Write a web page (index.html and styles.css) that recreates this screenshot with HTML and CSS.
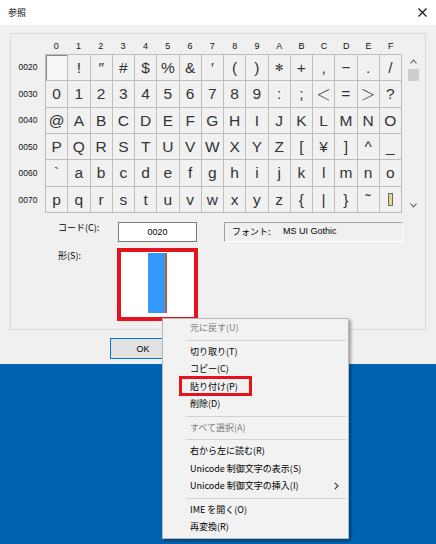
FILE: index.html
```html
<!DOCTYPE html>
<html lang="ja">
<head>
<meta charset="utf-8">
<title>参照</title>
<link rel="stylesheet" href="styles.css">
</head>
<body>
<div class="screen">
  <div class="dialog">
    <div class="titlebar">
      <span class="title">参照</span>
      <svg class="close" width="9" height="9" viewBox="0 0 9 9"><path d="M0.5 0.5 L8.5 8.5 M8.5 0.5 L0.5 8.5" stroke="#111" stroke-width="1.1" fill="none"/></svg>
    </div>
    <div class="body">
      <div class="group">
        <div class="table">
          <div class="corner"></div>
          <div class="colhead">
            <span>0</span><span>1</span><span>2</span><span>3</span><span>4</span><span>5</span><span>6</span><span>7</span><span>8</span><span>9</span><span>A</span><span>B</span><span>C</span><span>D</span><span>E</span><span>F</span>
          </div>
          <div class="corner"></div>
          <div class="rowlabels">
            <span>0020</span><span>0030</span><span>0040</span><span>0050</span><span>0060</span><span>0070</span>
          </div>
          <div class="cells">
            <span class="cell sel"></span><span class="cell">!</span><span class="cell">″</span><span class="cell">#</span><span class="cell">$</span><span class="cell">%</span><span class="cell">&amp;</span><span class="cell">′</span><span class="cell">(</span><span class="cell">)</span><span class="cell small">✻</span><span class="cell">+</span><span class="cell">,</span><span class="cell">−</span><span class="cell">.</span><span class="cell">/</span>
            <span class="cell">0</span><span class="cell">1</span><span class="cell">2</span><span class="cell">3</span><span class="cell">4</span><span class="cell">5</span><span class="cell">6</span><span class="cell">7</span><span class="cell">8</span><span class="cell">9</span><span class="cell">:</span><span class="cell">;</span><span class="cell cjk">＜</span><span class="cell">=</span><span class="cell cjk">＞</span><span class="cell">?</span>
            <span class="cell">@</span><span class="cell">A</span><span class="cell">B</span><span class="cell">C</span><span class="cell">D</span><span class="cell">E</span><span class="cell">F</span><span class="cell">G</span><span class="cell">H</span><span class="cell">I</span><span class="cell">J</span><span class="cell">K</span><span class="cell">L</span><span class="cell">M</span><span class="cell">N</span><span class="cell">O</span>
            <span class="cell">P</span><span class="cell">Q</span><span class="cell">R</span><span class="cell">S</span><span class="cell">T</span><span class="cell">U</span><span class="cell">V</span><span class="cell">W</span><span class="cell">X</span><span class="cell">Y</span><span class="cell">Z</span><span class="cell">[</span><span class="cell">¥</span><span class="cell">]</span><span class="cell">^</span><span class="cell">_</span>
            <span class="cell">`</span><span class="cell">a</span><span class="cell">b</span><span class="cell">c</span><span class="cell">d</span><span class="cell">e</span><span class="cell">f</span><span class="cell">g</span><span class="cell">h</span><span class="cell">i</span><span class="cell">j</span><span class="cell">k</span><span class="cell">l</span><span class="cell">m</span><span class="cell">n</span><span class="cell">o</span>
            <span class="cell">p</span><span class="cell">q</span><span class="cell">r</span><span class="cell">s</span><span class="cell">t</span><span class="cell">u</span><span class="cell">v</span><span class="cell">w</span><span class="cell">x</span><span class="cell">y</span><span class="cell">z</span><span class="cell">{</span><span class="cell">|</span><span class="cell">}</span><span class="cell">˜</span><span class="cell"><span class="del"></span></span>
          </div>
          <div class="scroll">
            <span class="arrow"><svg width="7" height="5" viewBox="0 0 7 5"><polyline points="0.5,4.5 3.5,1 6.5,4.5" stroke="#555" stroke-width="1.1" fill="none"/></svg></span>
            <span class="thumb"></span>
            <span class="track"></span>
            <span class="arrow"><svg width="7" height="5" viewBox="0 0 7 5"><polyline points="0.5,0.5 3.5,4 6.5,0.5" stroke="#555" stroke-width="1.1" fill="none"/></svg></span>
          </div>
        </div>
        <div class="coderow">
          <span class="lbl">コード(C):</span>
          <span class="codebox">0020</span>
          <span class="fontbox"><span class="fontlbl">フォント:</span><span class="fontname">MS UI Gothic</span></span>
        </div>
        <div class="shaperow">
          <span class="lbl">形(S):</span>
          <span class="preview"><span class="bar"></span></span>
        </div>
      </div>
      <div class="buttons">
        <span class="ok">OK</span>
      </div>
    </div>
  </div>

  <div class="menu">
    <div class="item dis">元に戻す(U)</div>
    <div class="sep"></div>
    <div class="item">切り取り(T)</div>
    <div class="item">コピー(C)</div>
    <div class="item">貼り付け(P)<span class="mark"></span></div>
    <div class="item">削除(D)</div>
    <div class="sep"></div>
    <div class="item dis">すべて選択(A)</div>
    <div class="sep"></div>
    <div class="item">右から左に読む(R)</div>
    <div class="item">Unicode 制御文字の表示(S)</div>
    <div class="item">Unicode 制御文字の挿入(I)<svg class="sub" width="5" height="8" viewBox="0 0 5 8"><polyline points="0.8,0.8 4,4 0.8,7.2" stroke="#333" stroke-width="1.1" fill="none"/></svg></div>
    <div class="sep"></div>
    <div class="item">IME を開く(O)</div>
    <div class="item">再変換(R)</div>
  </div>
</div>
</body>
</html>
```
FILE: styles.css
```css
html, body {
  margin: 0;
  padding: 0;
}
body {
  font-family: "Noto Sans CJK JP", "Noto Sans", sans-serif;
  color: #000;
}
.screen {
  position: relative;
  width: 436px;
  height: 544px;
  background: #0063b1;
  overflow: hidden;
}
.dialog {
  background: #f0f0f0;
  height: 364px;
}
.titlebar {
  height: 25px;
  background: #fff;
  display: flex;
  align-items: center;
  justify-content: space-between;
  padding: 0 9px 0 8px;
  box-sizing: border-box;
}
.title {
  font-size: 9px;
  line-height: 12px;
}
.close {
  display: block;
}
.body {
  padding: 8px 10px 0;
}
.group {
  height: 297px;
  box-sizing: border-box;
  border: 1px solid #d9d9d9;
  padding-top: 4px;
}
.table {
  display: grid;
  grid-template-columns: 34px 357px 19px;
  grid-template-rows: 16px 159px;
}
.colhead {
  display: grid;
  grid-template-columns: repeat(16, 1fr);
  align-items: center;
  text-align: center;
  font-family: "Liberation Sans", sans-serif;
  font-size: 9px;
  color: #111;
}
.rowlabels {
  display: grid;
  grid-template-rows: repeat(6, 1fr);
  align-items: center;
  text-align: center;
  font-family: "Liberation Sans", sans-serif;
  font-size: 8.5px;
  color: #111;
}
.cells {
  display: grid;
  grid-template-columns: repeat(16, 1fr);
  grid-template-rows: repeat(6, 1fr);
  gap: 1px;
  background: #bdbdbd;
  border: 1px solid #bdbdbd;
}
.cell {
  background: #f1f1f1;
  display: flex;
  align-items: center;
  justify-content: center;
  font-family: "Liberation Sans", sans-serif;
  font-size: 15.5px;
  color: #333;
  line-height: 1;
}
.cell.small {
  font-size: 10px;
}
.cell.cjk {
  font-family: "Noto Sans CJK JP", sans-serif;
  font-weight: 300;
  font-size: 15px;
}
.cell.sel {
  background: #f7f7f7;
  box-shadow: inset 1px 1px 0 #8a8a8a;
}
.del {
  width: 3px;
  height: 11px;
  border: 1px solid #6a6a6a;
  background: #e6d48a;
}
.scroll {
  padding-left: 3px;
  display: flex;
  flex-direction: column;
  align-items: center;
}
.arrow {
  height: 15px;
  display: flex;
  align-items: center;
  justify-content: center;
}
.thumb {
  width: 11px;
  height: 12px;
  background: #cdcdcd;
}
.track {
  flex: 1;
}
.coderow {
  display: flex;
  margin-top: 9px;
  padding-left: 47px;
}
.lbl {
  width: 60px;
  font-size: 9px;
  line-height: 12px;
}
.codebox {
  width: 79px;
  height: 20px;
  box-sizing: border-box;
  border: 1px solid #7a7a7a;
  background: #fff;
  display: flex;
  align-items: center;
  justify-content: center;
  font-family: "Liberation Sans", sans-serif;
  font-size: 9px;
}
.fontbox {
  margin-left: 27px;
  width: 179px;
  height: 20px;
  box-sizing: border-box;
  border-top: 1px solid #a0a0a0;
  border-left: 1px solid #a0a0a0;
  border-right: 1px solid #fff;
  border-bottom: 1px solid #fff;
  display: flex;
  align-items: center;
  padding: 0 0 2px 7px;
  font-size: 9px;
}
.fontlbl {
  width: 51px;
}
.fontname {
  font-family: "Liberation Sans", sans-serif;
}
.shaperow {
  display: flex;
  margin-top: 6px;
  padding-left: 47px;
}
.shaperow .lbl {
  width: 59px;
  padding-top: 2px;
}
.preview {
  width: 81px;
  height: 73px;
  box-sizing: border-box;
  border: 4px solid #e5131c;
  background: #fff;
  padding: 1px 0 0 27px;
}
.bar {
  display: block;
  width: 17px;
  height: 60px;
  background: #3399ff;
  border-right: 2px solid #b2642e;
}
.buttons {
  margin-top: 8px;
  padding-left: 100px;
}
.ok {
  display: flex;
  width: 66px;
  height: 21px;
  box-sizing: border-box;
  border: 1px solid #0078d7;
  background: #e1e1e1;
  align-items: center;
  justify-content: center;
  font-family: "Liberation Sans", sans-serif;
  font-size: 9px;
}
.menu {
  position: absolute;
  left: 162px;
  top: 318px;
  width: 187px;
  box-sizing: border-box;
  border: 1px solid #b8b8b8;
  background: #f2f2f2;
  padding: 0 0 2px;
  box-shadow: 2px 2px 3px rgba(0, 0, 0, 0.35);
}
.item {
  position: relative;
  height: 17.5px;
  display: flex;
  align-items: center;
  padding-left: 27px;
  font-size: 9px;
  color: #000;
  white-space: nowrap;
}
.item.dis {
  color: #7d7d7d;
}
.sep {
  height: 1px;
  background: #d2d2d2;
  margin: 3px 2px 2px 23px;
}
.mark {
  position: absolute;
  left: 16px;
  top: -1.5px;
  width: 73px;
  height: 20px;
  box-sizing: border-box;
  border: 3px solid #e5131c;
}
.sub {
  position: absolute;
  right: 9px;
  top: 5px;
}
```
